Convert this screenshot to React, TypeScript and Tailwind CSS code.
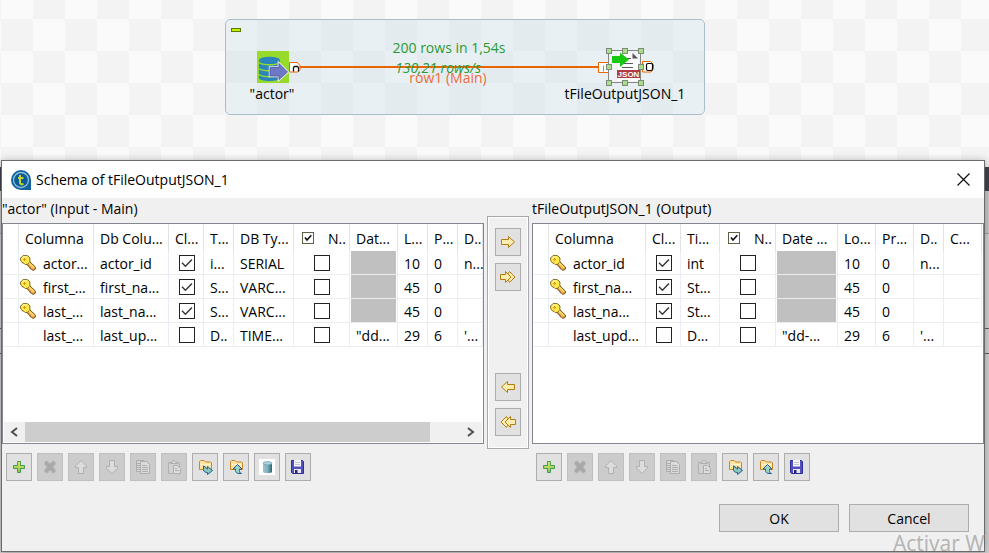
import React from "react";

type Row = { icon?: boolean; cells: (string | boolean | null)[] };
type Column = { width: string; title: string; kind?: "check" | "checkAll" | "name" };

const inputColumns: Column[] = [
  { width: "w-[16px]", title: "" },
  { width: "w-[75px]", title: "Columna", kind: "name" },
  { width: "w-[75px]", title: "Db Colu..." },
  { width: "w-[35px]", title: "Cl...", kind: "check" },
  { width: "w-[30px]", title: "T..." },
  { width: "w-[60px]", title: "DB Ty..." },
  { width: "w-[56px]", title: "N..", kind: "checkAll" },
  { width: "w-[48px]", title: "Dat..." },
  { width: "w-[30px]", title: "L..." },
  { width: "w-[30px]", title: "P..." },
  { width: "w-[25px]", title: "D.." },
];

const inputRows: Row[] = [
  { icon: true, cells: ["", "actor...", "actor_id", true, "i...", "SERIAL", false, null, "10", "0", "n..."] },
  { icon: true, cells: ["", "first_...", "first_na...", true, "S...", "VARC...", false, null, "45", "0", ""] },
  { icon: true, cells: ["", "last_...", "last_na...", true, "S...", "VARC...", false, null, "45", "0", ""] },
  { cells: ["", "last_...", "last_up...", false, "D..", "TIME...", false, "\"dd...", "29", "6", "'..."] },
];

const outputColumns: Column[] = [
  { width: "w-[16px]", title: "" },
  { width: "w-[97px]", title: "Columna", kind: "name" },
  { width: "w-[35px]", title: "Cl...", kind: "check" },
  { width: "w-[39px]", title: "Ti..." },
  { width: "w-[56px]", title: "N..", kind: "checkAll" },
  { width: "w-[62px]", title: "Date ..." },
  { width: "w-[38px]", title: "Lo..." },
  { width: "w-[38px]", title: "Pr..." },
  { width: "w-[30px]", title: "D.." },
  { width: "w-[38px]", title: "C..." },
];

const outputRows: Row[] = [
  { icon: true, cells: ["", "actor_id", true, "int", false, null, "10", "0", "n...", ""] },
  { icon: true, cells: ["", "first_na...", true, "St...", false, null, "45", "0", "", ""] },
  { icon: true, cells: ["", "last_na...", true, "St...", false, null, "45", "0", "", ""] },
  { cells: ["", "last_upd...", false, "D...", false, "\"dd-...", "29", "6", "'...", ""] },
];

function KeyIcon() {
  return (
    <svg width="16" height="16" viewBox="0 0 16 16" className="shrink-0">
      <path d="M8.5 5.5 15.3 12 V14.2 L13 15.4 L11.5 14.3 L10 13.5 L9.8 12 L8.3 11.3 L7.8 10 L6.5 9z" fill="#f9b04a" stroke="#5b3d0c" strokeWidth=".9" />
      <path d="M3 .6h4.300l2.600 2.200v4L8 9.200 5.200 9.600 4 8.300 2.200 7.700.6 5.300V3z" fill="#ffec48" stroke="#75590e" strokeWidth=".9" />
      <path d="M2.200 3.200 3.600 1.800h3" stroke="#fffcc8" fill="none" />
      <path d="M4.500 3v3M3 4.500h3" stroke="#f08c2e" fill="none" />
      <path d="M9 7.800 14 12.800" stroke="#ffe566" fill="none" strokeWidth="1.300" />
    </svg>
  );
}

function Check({ on, label }: { on: boolean; label: string }) {
  return (
    <span className="mx-auto grid size-4">
      <input
        type="checkbox"
        defaultChecked={on}
        aria-label={label}
        className="peer col-start-1 row-start-1 size-4 appearance-none border border-[#222] bg-white"
      />
      <svg viewBox="0 0 16 16" className="pointer-events-none invisible col-start-1 row-start-1 size-4 peer-checked:visible">
        <path d="M3 7.8 6.4 11.2 13 4.6" fill="none" stroke="#333" strokeWidth="1.4" />
      </svg>
    </span>
  );
}

function SchemaTable({ name, columns, rows }: { name: string; columns: Column[]; rows: Row[] }) {
  return (
    <table aria-label={name} className="w-0 table-fixed border-separate border-spacing-0">
      <colgroup>
        {columns.map((c, i) => (
          <col key={i} className={c.width} />
        ))}
      </colgroup>
      <thead>
        <tr className="h-[27px]">
          {columns.map((c, i) => (
            <th key={i} className="border-r border-[#e2e2e2] p-0 text-left font-normal whitespace-nowrap">
              {c.kind === "checkAll" ? (
                <label className="flex items-center gap-[14px] pl-2">
                  <span className="grid size-3 shrink-0">
                    <input
                      type="checkbox"
                      defaultChecked
                      aria-label="Nullable"
                      className="peer col-start-1 row-start-1 size-3 appearance-none border border-[#5f6147] bg-white"
                    />
                    <svg viewBox="0 0 12 12" className="pointer-events-none invisible col-start-1 row-start-1 size-3 peer-checked:visible">
                      <path d="M3 5.5 5 8 9.3 3.3" fill="none" stroke="#111" strokeWidth="1.6" />
                    </svg>
                  </span>
                  <span className="pt-0.5">{c.title}</span>
                </label>
              ) : (
                <div className="pt-0.5 pl-1.5">{c.title}</div>
              )}
            </th>
          ))}
        </tr>
      </thead>
      <tbody>
        {rows.map((row, r) => (
          <tr key={r} className="h-6">
            {columns.map((c, i) => {
              const v = row.cells[i];
              return (
                <td
                  key={i}
                  className="h-6 border-r border-b border-r-[#e8edf8] border-b-[#ececf0] p-0 whitespace-nowrap"
                >
                  {typeof v === "boolean" ? (
                    <div className={c.kind === "check" ? "flex items-center pl-0.5" : "flex items-center"}>
                      <Check on={v} label={c.kind === "check" ? "Key" : "Nullable"} />
                    </div>
                  ) : v === null ? (
                    <div className="mx-px h-[23px] bg-[#c0c0c0]" />
                  ) : c.kind === "name" ? (
                    <div className="flex items-center gap-[7px] pl-px">
                      {row.icon ? <KeyIcon /> : <span className="w-4" />}
                      <span className="pt-0.5">{v}</span>
                    </div>
                  ) : (
                    <div className="pt-0.5 pl-1.5">{v}</div>
                  )}
                </td>
              );
            })}
          </tr>
        ))}
      </tbody>
    </table>
  );
}

function FolderBase() {
  return (
    <>
      <path d="M2.500 10.500v-8l1-1h3.500l1.500 1.500h5l1 1v6.500z" fill="#ffe3a0" stroke="#cb8527" />
      <path d="M3.500 5.500h10" stroke="#fff4d2" />
    </>
  );
}

const icons: Record<string, React.ReactNode> = {
  Add: (
    <>
      <defs>
        <linearGradient id="addFill" x1="0" y1="0" x2="0" y2="1">
          <stop offset="0" stopColor="#e3ec62" />
          <stop offset="1" stopColor="#8fc24a" />
        </linearGradient>
      </defs>
      <path d="M6.500 2.500h3v4h4v3h-4v4h-3v-4h-4v-3h4z" fill="url(#addFill)" stroke="#3f9a57" />
    </>
  ),
  Remove: (
    <path d="M2.500 3.500 4 2h1.500L8 5l2.500-3H12l1.500 1.500V5L11 8l2.500 3v1.500L12 14h-1.500L8 11l-2.500 3H4l-1.500-1.500V11L5 8 2.500 5z" fill="#a9a9a9" stroke="#bababa" />
  ),
  "Move up": <path d="M8 1.500 13.500 7v1.500h-3v6h-5v-6h-3V7z" fill="#dcdcdc" stroke="#b0b0b0" />,
  "Move down": <path d="M8 14.500 13.500 9V7.500h-3v-6h-5v6h-3V9z" fill="#dcdcdc" stroke="#b0b0b0" />,
  Copy: (
    <>
      <path d="M1.500 1.500h7v11h-7z" fill="#d8d8d8" stroke="#adadad" />
      <path d="M2 4.500h3M2 6.500h3M2 8.500h3M2 10.500h3" stroke="#adadad" />
      <path d="M5.500 2.500h6l3 3v9h-9z" fill="#dcdcdc" stroke="#adadad" />
      <path d="M7 6.500h5M7 8.500h6M7 10.500h6M7 12.500h6" stroke="#adadad" />
    </>
  ),
  Paste: (
    <>
      <path d="M2.500 3.500h11v11h-11z" fill="#d2d2d2" stroke="#b0b0b0" />
      <path d="M4.500 4.500v-1l2-.5 1-1.500h1l1 1.500 2 .5v1z" fill="#dcdcdc" stroke="#adadad" />
      <path d="M7.500 6.500h4l3 3v5h-7z" fill="#dedede" stroke="#adadad" />
      <path d="M9 9.500h2M9 11.500h4" stroke="#adadad" />
    </>
  ),
  Import: (
    <>
      <FolderBase />
      <path d="M6.500 7v3.500c0 2 1.500 3 4 3v2l5-4-5-4v2.500c-1 0-1.500-.5-1.500-1.500z" fill="#8ccabf" stroke="#1f5f96" />
    </>
  ),
  Export: (
    <>
      <FolderBase />
      <path d="M9.500 5.500 14 10h-2.500v1.500c0 1.500.5 2.500 2 3h-2.500c-2.500 0-3.500-1.500-3.500-3V10H5z" fill="#9ad3c8" stroke="#1f5f96" />
    </>
  ),
  "Database type": (
    <>
      <defs>
        <linearGradient id="cylinder">
          <stop offset="0" stopColor="#9fc4cc" />
          <stop offset=".5" stopColor="#7fb2bd" />
          <stop offset="1" stopColor="#2f6475" />
        </linearGradient>
      </defs>
      <path d="M0 0h16v16H0z" fill="#fff" />
      <path d="M4 4v9c0 1.500 9 1.500 9 0V4z" fill="url(#cylinder)" />
      <ellipse cx="8.500" cy="4.200" rx="4.500" ry="1.700" fill="#a9d3dc" stroke="#6699a4" strokeWidth=".6" />
    </>
  ),
  Save: (
    <>
      <path d="M1.500 1.500h11l1 1v12h-11l-1-1z" fill="#5350bd" stroke="#2f2e98" />
      <path d="M4 1h7v6.500H4z" fill="#f7f7fb" />
      <path d="M5 3.500h5M5 5.500h5" stroke="#c4c4cc" />
      <path d="M4 10h7v4H4z" fill="#e8e8f2" />
      <path d="M5 11h2.500v3H5z" fill="#26257e" />
    </>
  ),
};

function ToolButton({ name, disabled }: { name: string; disabled?: boolean }) {
  return (
    <button
      type="button"
      aria-label={name}
      disabled={disabled}
      className="grid h-7 w-[26px] place-items-center border border-[#adadad] bg-[#e1e1e1] disabled:border-[#bfbfbf] disabled:bg-[#cccccc]"
    >
      <svg width="16" height="16" viewBox="0 0 16 16" fill="none">
        {icons[name]}
      </svg>
    </button>
  );
}

function Toolbar({ withDatabase }: { withDatabase?: boolean }) {
  return (
    <div className="flex gap-[5px] px-1 pt-[9px]">
      <ToolButton name="Add" />
      <ToolButton name="Remove" disabled />
      <ToolButton name="Move up" disabled />
      <ToolButton name="Move down" disabled />
      <ToolButton name="Copy" disabled />
      <ToolButton name="Paste" disabled />
      <ToolButton name="Import" />
      <ToolButton name="Export" />
      {withDatabase && <ToolButton name="Database type" />}
      <ToolButton name="Save" />
    </div>
  );
}

function TransferButton({ label, back, all }: { label: string; back?: boolean; all?: boolean }) {
  return (
    <button
      type="button"
      aria-label={label}
      className="grid h-7 w-[26px] place-items-center border border-[#adadad] bg-[#e1e1e1]"
    >
      <svg width="16" height="16" viewBox="0 0 16 16" fill="#fdeeb0" stroke="#b47a14" className={back ? "rotate-180" : ""}>
        {all ? (
          <>
            <path d="M9.500 2.500 15 8l-5.500 5.500-1-2V4.500z" />
            <path d="M.5 5.500h5v-3L11 8l-5.500 5.500v-3h-5z" />
          </>
        ) : (
          <path d="M1.500 5.500h7v-3L14.500 8l-6 5.500v-3h-7z" />
        )}
      </svg>
    </button>
  );
}

function Canvas() {
  return (
    <section className="relative h-40 overflow-hidden bg-[repeating-conic-gradient(#fafafa_0_25%,#f3f3f3_0_50%)] bg-[length:64px_64px] bg-[position:-31px_-13px]">
      <div className="absolute top-[19px] left-[225px] h-24 w-[480px] rounded-[5px] border border-[#a9bfcc] bg-[rgba(199,221,233,0.35)]" />
      <button
        type="button"
        aria-label="Collapse"
        className="absolute top-[28px] left-[231px] h-1 w-2.5 border border-[#5d7a00] bg-[#c3f000]"
      />
      <div className="absolute top-[66px] left-[300px] h-0.5 w-[298px] bg-[#ea6500]" />

      <svg className="absolute top-[51px] left-[257px]" width="44" height="32" viewBox="0 0 44 32">
        <path d="M0 0h32v32H0z" fill="#98da2b" />
        <path d="M2 10v17c0 4 21 4 21 0V10z" fill="#2a84bd" />
        <ellipse cx="12.500" cy="9" rx="10.500" ry="3.300" fill="#2a84bd" />
        <path d="M2 11.500c3 3 18 3 21 0M2 17.500c3 3 18 3 21 0M2 23.500c3 3 18 3 21 0" fill="none" stroke="#98da2b" strokeWidth="1.600" />
        <path d="M13 16.500h9v-4l8.500 8.500-8.500 7.500v-3.500h-9z" fill="#6f78c4" stroke="#e9e9f6" strokeWidth="2.500" />
        <path d="M13 16.500h9v-4l8.500 8.500-8.500 7.500v-3.500h-9z" fill="#6f78c4" stroke="#4d539c" strokeWidth=".8" />
        <path d="M32.500 11.500h8l2.500 3v4l-2 2.500h-8.500z" fill="#fff" stroke="#ea6500" />
        <path d="M36.500 20.500v-4l1-1h3l1 1v4" fill="none" stroke="#111" strokeWidth="1.300" />
      </svg>
      <div className="absolute top-[84px] left-[232px] w-20 text-center">"actor"</div>

      <div className="absolute top-[38px] left-[374px] w-[150px] text-center text-[#2a9a35]">200 rows in 1,54s</div>
      <div className="absolute top-[58px] left-[374px] w-32 text-center whitespace-nowrap text-[#2a9a35] italic">130,21 rows/s</div>
      <div className="absolute top-[68px] left-[388px] w-[120px] text-center text-[#ec6b3b]">row1 (Main)</div>

      <svg className="absolute top-[48px] left-[598px]" width="58" height="38" viewBox="0 0 58 38">
        <path d="M.5 14.500h10v10H.5z" fill="#fff" stroke="#ea6500" />
        <path d="M5.500 17.500v6" stroke="#d08040" />
        <path d="M11 3h32v32H11z" fill="#f1f4f6" />
        <path d="M20 5h14l6 6v22H20z" fill="#fdfdfd" />
        <path d="M34.500 5v5.500H40z" fill="#555" />
        <path d="M25 10.500h8M25 15.500h10M24 19.500h11" stroke="#5a5a5a" />
        <path d="M14 8h8V4.500l9 7-9 7.500v-4h-8z" fill="#17c80f" />
        <path d="M19 22h23v8H19z" fill="#b23a40" />
        <text x="30.500" y="29" textAnchor="middle" fill="#fff" fontSize="8" fontWeight="700" fontFamily="Liberation Sans, sans-serif">JSON</text>
        <path d="M10.500 2.500h32v32h-32z" fill="none" stroke="#858585" />
        <path d="M44.500 13.500h8l3 3v4l-2.500 3.500h-8.500z" fill="#fff" stroke="#ea6500" />
        <rect x="48.500" y="15.500" width="6" height="7" rx="1.500" fill="#fff" stroke="#000" strokeWidth="1.200" />
        {[8.5, 24.5, 40.5].map((x) =>
          [0.5, 16.5, 32.5].map((y) =>
            x === 24.5 && y === 16.5 ? null : (
              <rect key={`${x}-${y}`} x={x} y={y} width="5" height="5" fill="#a9dc8c" stroke="#7d8a78" />
            ),
          ),
        )}
      </svg>
      <div className="absolute top-[84px] left-[550px] w-[150px] text-center">tFileOutputJSON_1</div>
    </section>
  );
}

function ScrollBar() {
  return (
    <div className="mx-px mb-px flex h-5 items-stretch bg-[#f0f0f0]">
      <button type="button" aria-label="Scroll left" className="flex w-[21px] items-center pl-1.5">
        <svg width="8" height="10" viewBox="0 0 8 10">
          <path d="M7 1 2 5l5 4" fill="none" stroke="#505050" strokeWidth="2" />
        </svg>
      </button>
      <div className="flex-1">
        <div className="h-full w-[92%] bg-[#cdcdcd]" />
      </div>
      <button type="button" aria-label="Scroll right" className="flex w-[17px] items-center pl-0.5">
        <svg width="8" height="10" viewBox="0 0 8 10">
          <path d="M1 1l5 4-5 4" fill="none" stroke="#505050" strokeWidth="2" />
        </svg>
      </button>
    </div>
  );
}

export default function App() {
  return (
    <div className="relative min-h-screen overflow-hidden bg-[#d2d2d2] font-['Open_Sans','Noto_Sans',sans-serif] text-[14px] leading-5 text-black">
      <Canvas />
      <div className="absolute top-40 right-0 h-[7px] w-full bg-[#efefef]" />
      <div className="absolute top-[167px] right-0 h-6 w-full bg-[#40444f]" />
      <div className="absolute top-[191px] right-0 h-[43px] w-full border-b border-[#a0a0a0] bg-[#c8c8c8]" />
      <div className="absolute top-[328px] right-0 h-[26px] w-full border-y border-[#606060]" />

      <main
        role="dialog"
        aria-label="Schema of tFileOutputJSON_1"
        className="relative mr-1 ml-px border border-[#6b6b6b] bg-[#f0f0f0] shadow-[0_1px_8px_rgba(0,0,0,0.3)]"
      >
        <header className="flex h-[37px] items-center gap-[5px] bg-white pr-3.5 pl-[9px]">
          <svg width="20" height="20" viewBox="0 0 20 20">
            <path d="M10 0a10 10 0 0 1 10 10v10H10A10 10 0 0 1 10 0z" fill="#12629f" />
            <circle cx="10" cy="10" r="7.500" fill="#0d5a96" stroke="#8fc0dc" strokeWidth="1.300" />
            <path d="M9 5v7.500c0 1.500 1.200 2 3.500 1.500M7 8h5.500" fill="none" stroke="#c3d82e" strokeWidth="2" />
          </svg>
          <h1 className="flex-1">Schema of tFileOutputJSON_1</h1>
          <button type="button" aria-label="Close">
            <svg width="13" height="13" viewBox="0 0 13 13">
              <path d="M.5.5l12 12M12.500.5l-12 12" stroke="#111" strokeWidth="1.200" />
            </svg>
          </button>
        </header>

        <div className="flex items-start gap-[3px]">
          <section className="min-w-0 flex-[482_1_0%]">
            <h2 className="h-[25px] pt-px">"actor" (Input - Main)</h2>
            <div className="flex h-[221px] flex-col justify-between overflow-hidden border border-[#828790] bg-white">
              <SchemaTable name="actor (Input - Main)" columns={inputColumns} rows={inputRows} />
              <ScrollBar />
            </div>
            <Toolbar withDatabase />
          </section>

          <div className="mt-[18px] flex h-[233px] w-[42px] flex-col items-center gap-[7px] border border-[#a7a7ad] bg-[#f0f0f0] pt-[11px] pb-3 inset-ring inset-ring-white">
            <TransferButton label="Copy selected to output" />
            <TransferButton label="Copy all to output" all />
            <div className="flex-1" />
            <TransferButton label="Copy selected to input" back />
            <TransferButton label="Copy all to input" back all />
          </div>

          <section className="min-w-0 flex-[452_1_0%]">
            <h2 className="h-[25px] pt-px">tFileOutputJSON_1 (Output)</h2>
            <div className="h-[221px] overflow-hidden border border-[#828790] bg-white">
              <SchemaTable name="tFileOutputJSON_1 (Output)" columns={outputColumns} rows={outputRows} />
            </div>
            <Toolbar />
          </section>
        </div>

        <footer className="flex justify-end gap-2.5 pt-[23px] pr-[15px] pb-[19px]">
          <button type="button" className="h-7 w-[120px] border border-[#adadad] bg-[#e1e1e1] pt-px">OK</button>
          <button type="button" className="h-7 w-[120px] border border-[#adadad] bg-[#e1e1e1] pt-px">Cancel</button>
        </footer>
      </main>

      <p className="pointer-events-none absolute top-[527px] left-[893px] text-[21px] leading-8 whitespace-nowrap text-[#b4b4b4]">
        Activar W
      </p>
    </div>
  );
}
